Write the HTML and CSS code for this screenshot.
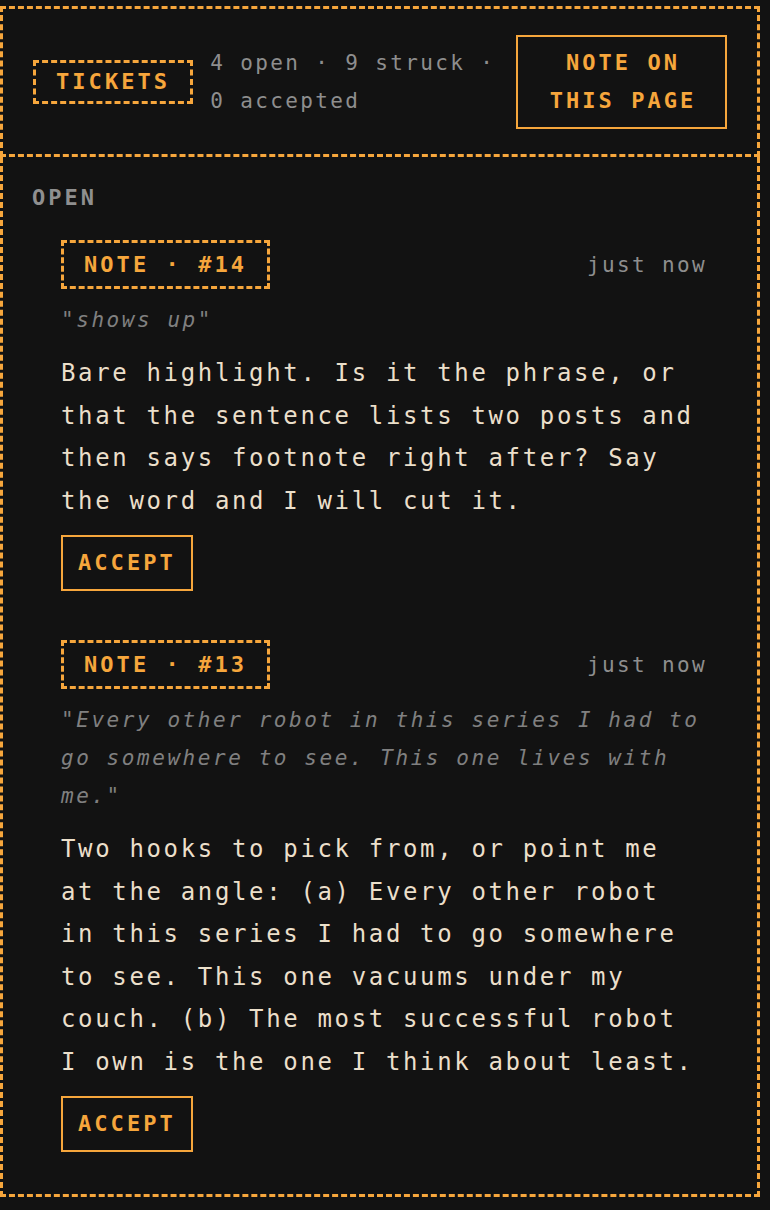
FILE: index.html
```html
<!DOCTYPE html>
<html lang="en">
<head>
<meta charset="utf-8">
<title>Tickets</title>
<link rel="stylesheet" href="styles.css">
</head>
<body>
<div class="panel">
  <header class="head">
    <span class="badge badge-title">TICKETS</span>
    <div class="meta">4 open · 9 struck · 0 accepted</div>
    <button class="btn btn-note">NOTE ON THIS PAGE</button>
  </header>
  <section class="list">
    <h2 class="section-title">OPEN</h2>
    <article class="note">
      <div class="note-head">
        <span class="badge badge-note">NOTE · #14</span>
        <span class="time">just now</span>
      </div>
      <p class="quote">"shows up"</p>
      <p class="body">Bare highlight. Is it the phrase, or that the sentence lists two posts and then says footnote right after? Say the word and I will cut it.</p>
      <button class="btn btn-accept">ACCEPT</button>
    </article>
    <article class="note">
      <div class="note-head">
        <span class="badge badge-note">NOTE · #13</span>
        <span class="time">just now</span>
      </div>
      <p class="quote">"Every other robot in this series I had to go somewhere to see. This one lives with me."</p>
      <p class="body">Two hooks to pick from, or point me at the angle: (a) Every other robot in this series I had to go somewhere to see. This one vacuums under my couch. (b) The most successful robot I own is the one I think about least.</p>
      <button class="btn btn-accept">ACCEPT</button>
    </article>
  </section>
</div>
</body>
</html>
```
FILE: styles.css
```css
html, body {
  margin: 0;
  padding: 0;
  background: #121212;
}
body {
  font-family: "DejaVu Sans Mono", "Liberation Mono", monospace;
  color: #ebdfca;
}
.panel {
  width: 760px;
  margin-top: 6px;
}
.head {
  display: flex;
  align-items: center;
  gap: 17px;
  padding: 26px 30px 25px 30px;
  border: 3px dashed #f6a63c;
}
.badge {
  display: inline-block;
  border: 3px dashed #f6a63c;
  color: #f6a63c;
  font-weight: bold;
  font-size: 22px;
  letter-spacing: 3.06px;
  white-space: nowrap;
}
.badge-title {
  line-height: 38px;
  padding: 0 20px 0 20px;
}
.badge-note {
  line-height: 43px;
  padding: 0 20px 0 20px;
}
.meta {
  flex: 1;
  color: #8e8e8e;
  font-size: 21px;
  letter-spacing: 2.36px;
  line-height: 38px;
}
.btn {
  background: transparent;
  border: 2px solid #f6a63c;
  color: #f6a63c;
  font-family: inherit;
  font-weight: bold;
  font-size: 22px;
  letter-spacing: 3.06px;
  line-height: 38px;
  margin: 0;
  cursor: pointer;
}
.btn-note {
  width: 211px;
  padding: 7px 24px 7px 27px;
  text-align: center;
}
.btn-accept {
  display: block;
  padding: 7px 15px 7px 15px;
  margin-top: 13px;
}
.list {
  border: 3px dashed #f6a63c;
  border-top: none;
  padding: 22px 29px 42px 29px;
}
.section-title {
  margin: 0 0 23px 0;
  font-size: 22px;
  font-weight: bold;
  letter-spacing: 3px;
  line-height: 38px;
  color: #8f8f8f;
}
.note {
  margin: 0 21px 49px 29px;
}
.note:last-child {
  margin-bottom: 0;
}
.note-head {
  display: flex;
  justify-content: space-between;
  align-items: center;
}
.time {
  color: #8e8e8e;
  font-size: 21px;
  letter-spacing: 2.36px;
  line-height: 38px;
}
.quote {
  margin: 12px 0 0 0;
  font-style: italic;
  color: #808080;
  font-size: 21px;
  letter-spacing: 2.56px;
  line-height: 38px;
}
.body {
  margin: 13px 0 0 0;
  font-size: 24px;
  letter-spacing: 2.65px;
  line-height: 42.5px;
  color: #ebdfca;
}
```
